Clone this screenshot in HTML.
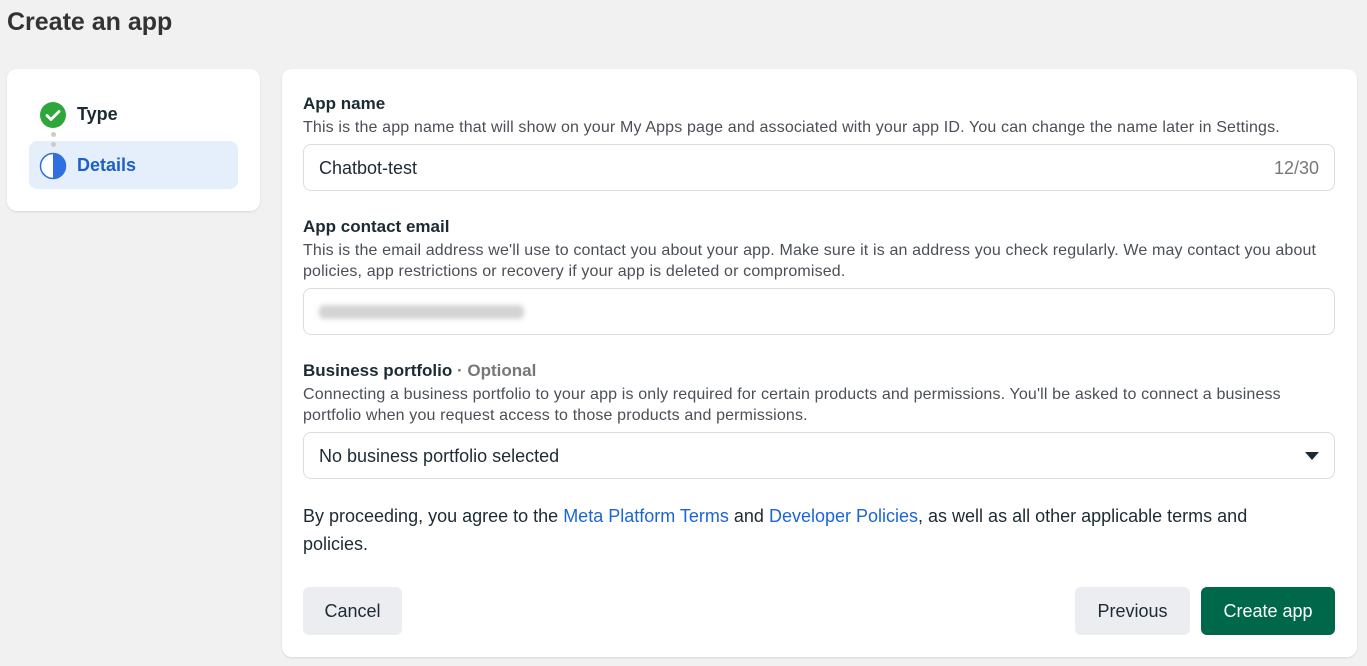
<!DOCTYPE html>
<html><head><style>
*{box-sizing:border-box;margin:0;padding:0}
body{width:1367px;height:666px;background:#f1f1f1;font-family:"Liberation Sans",Arial,sans-serif;color:#1c2b33;position:relative;overflow:hidden}
h1{position:absolute;left:7px;top:8px;font-size:25px;font-weight:bold;color:#333}
.side{position:absolute;left:7px;top:69px;width:253px;height:142px;background:#fff;border-radius:10px;box-shadow:0 1px 2px rgba(0,0,0,.1)}
.main{position:absolute;left:282px;top:69px;width:1075px;height:588px;background:#fff;border-radius:10px;box-shadow:0 1px 2px rgba(0,0,0,.1)}
.abs{position:absolute}
.lbl{font-size:17px;font-weight:bold;color:#1c2b33}
.desc{font-size:16px;letter-spacing:.15px;color:#4b4f56;line-height:21px;width:1015px;white-space:normal}
.inp{position:absolute;left:21px;width:1032px;height:47px;border:1px solid #dadde1;border-radius:8px;font-size:18px;padding:13px 15px;color:#1c2b33}
a{color:#1a66d6;text-decoration:none}
.btn{position:absolute;height:48px;border-radius:6px;font-size:18px;text-align:center;line-height:48px}
</style></head><body>
<h1>Create an app</h1>
<div class="side">
 <div class="abs" style="left:22px;top:72px;width:209px;height:48px;background:#e5effc;border-radius:8px"></div>
 <svg class="abs" style="left:32px;top:32px" width="28" height="28" viewBox="0 0 28 28"><circle cx="14" cy="14" r="13" fill="#2ea63c"/><path d="M8 14.5l4 4 8-8" stroke="#fff" stroke-width="2.8" fill="none" stroke-linecap="round" stroke-linejoin="round"/></svg>
 <div class="abs" style="left:44px;top:63px;width:5px;height:5px;border-radius:50%;background:#ccc"></div>
 <div class="abs" style="left:44px;top:73px;width:5px;height:5px;border-radius:50%;background:#ccc"></div>
 <svg class="abs" style="left:32px;top:83px" width="28" height="28" viewBox="0 0 28 28"><circle cx="14" cy="14" r="12.5" fill="#fff" stroke="#2f6fe0" stroke-width="1.5"/><path d="M14 1.5a12.5 12.5 0 0 1 0 25z" fill="#2f6fe0"/></svg>
 <div class="abs" style="left:70px;top:35px;font-size:18px;font-weight:bold;color:#1c2b33">Type</div>
 <div class="abs" style="left:70px;top:86px;font-size:18px;font-weight:bold;color:#1e5fc9">Details</div>
</div>
<div class="main">
 <div class="abs lbl" style="left:21px;top:25px">App name</div>
 <div class="abs desc" style="left:21px;top:48px;width:1040px">This is the app name that will show on your My Apps page and associated with your app ID. You can change the name later in Settings.</div>
 <div class="inp" style="top:75px">Chatbot-test<span style="float:right;color:#777">12/30</span></div>
 <div class="abs lbl" style="left:21px;top:148px">App contact email</div>
 <div class="abs desc" style="left:21px;top:171px">This is the email address we'll use to contact you about your app. Make sure it is an address you check regularly. We may contact you about policies, app restrictions or recovery if your app is deleted or compromised.</div>
 <div class="inp" style="top:219px"><div style="width:205px;height:14px;margin-top:3px;background:#d4d4d4;border-radius:5px;filter:blur(2.5px)"></div></div>
 <div class="abs lbl" style="left:21px;top:292px">Business portfolio <span style="color:#777">· Optional</span></div>
 <div class="abs desc" style="left:21px;top:315px">Connecting a business portfolio to your app is only required for certain products and permissions. You'll be asked to connect a business portfolio when you request access to those products and permissions.</div>
 <div class="inp" style="top:363px">No business portfolio selected<svg style="float:right;margin-top:6px" width="14" height="8" viewBox="0 0 14 8"><path d="M0 0h14L7 8z" fill="#1c2b33"/></svg></div>
 <div class="abs" style="left:21px;top:433px;width:990px;font-size:18px;line-height:28px;color:#1c2b33">By proceeding, you agree to the <a>Meta Platform Terms</a> and <a>Developer Policies</a>, as well as all other applicable terms and policies.</div>
 <div class="btn" style="left:21px;top:518px;width:99px;background:#ebedf0">Cancel</div>
 <div class="btn" style="left:793px;top:518px;width:115px;background:#ebedf0">Previous</div>
 <div class="btn" style="left:919px;top:518px;width:134px;background:#00684a;color:#fff">Create app</div>
</div>
</body></html>
